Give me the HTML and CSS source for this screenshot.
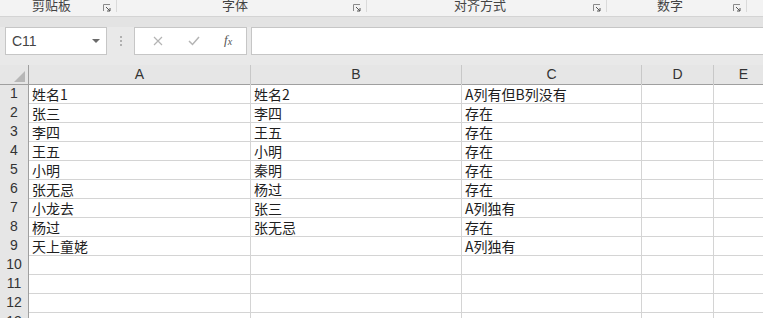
FILE: index.html
```html
<!DOCTYPE html>
<html lang="zh-CN">
<head>
    <meta charset="UTF-8">
    <title>工作表</title>
    <link rel="stylesheet" href="styles.css">
</head>
<body>
    <div class="ribbon">
        <div class="group group-clip">
            <span class="group-label">剪贴板</span>
            <svg class="launcher" width="8" height="8" viewBox="0 0 8 8"><path d="M0.5 7V0.5H7" fill="none" stroke="#8a8a8a"/><path d="M3 3L7 7M4 7H7V4" fill="none" stroke="#555"/></svg>
        </div>
        <div class="group group-font">
            <span class="group-label">字体</span>
            <svg class="launcher" width="8" height="8" viewBox="0 0 8 8"><path d="M0.5 7V0.5H7" fill="none" stroke="#8a8a8a"/><path d="M3 3L7 7M4 7H7V4" fill="none" stroke="#555"/></svg>
        </div>
        <div class="group group-align">
            <span class="group-label">对齐方式</span>
            <svg class="launcher" width="8" height="8" viewBox="0 0 8 8"><path d="M0.5 7V0.5H7" fill="none" stroke="#8a8a8a"/><path d="M3 3L7 7M4 7H7V4" fill="none" stroke="#555"/></svg>
        </div>
        <div class="group group-number">
            <span class="group-label">数字</span>
            <svg class="launcher" width="8" height="8" viewBox="0 0 8 8"><path d="M0.5 7V0.5H7" fill="none" stroke="#8a8a8a"/><path d="M3 3L7 7M4 7H7V4" fill="none" stroke="#555"/></svg>
        </div>
        <div class="group group-rest"></div>
    </div>
    <div class="ribbon-strip"></div>

    <div class="formula-bar">
        <div class="name-box">
            <span>C11</span>
            <span class="name-arrow"></span>
        </div>
        <div class="grip"><i></i><i></i><i></i></div>
        <div class="fx-box">
            <svg class="fx-btn" width="10" height="10" viewBox="0 0 10 10"><path d="M1 1L9 9M9 1L1 9" stroke="#b4b4b4" stroke-width="1.2"/></svg>
            <svg class="fx-btn" width="12" height="10" viewBox="0 0 12 10"><path d="M1 5L4.5 8.5L11 1" fill="none" stroke="#b4b4b4" stroke-width="1.5"/></svg>
            <span class="fx-label">f<sub>x</sub></span>
        </div>
        <div class="formula-input"></div>
    </div>

    <div class="sheet">
        <div class="row head-row">
            <div class="corner"><span class="corner-tri"></span></div>
            <div class="col-head">A</div>
            <div class="col-head">B</div>
            <div class="col-head">C</div>
            <div class="col-head">D</div>
            <div class="col-head">E</div>
        </div>
        <div class="row">
            <div class="row-head">1</div>
            <div class="cell">姓名1</div><div class="cell">姓名2</div><div class="cell">A列有但B列没有</div><div class="cell"></div><div class="cell"></div>
        </div>
        <div class="row">
            <div class="row-head">2</div>
            <div class="cell">张三</div><div class="cell">李四</div><div class="cell">存在</div><div class="cell"></div><div class="cell"></div>
        </div>
        <div class="row">
            <div class="row-head">3</div>
            <div class="cell">李四</div><div class="cell">王五</div><div class="cell">存在</div><div class="cell"></div><div class="cell"></div>
        </div>
        <div class="row">
            <div class="row-head">4</div>
            <div class="cell">王五</div><div class="cell">小明</div><div class="cell">存在</div><div class="cell"></div><div class="cell"></div>
        </div>
        <div class="row">
            <div class="row-head">5</div>
            <div class="cell">小明</div><div class="cell">秦明</div><div class="cell">存在</div><div class="cell"></div><div class="cell"></div>
        </div>
        <div class="row">
            <div class="row-head">6</div>
            <div class="cell">张无忌</div><div class="cell">杨过</div><div class="cell">存在</div><div class="cell"></div><div class="cell"></div>
        </div>
        <div class="row">
            <div class="row-head">7</div>
            <div class="cell">小龙去</div><div class="cell">张三</div><div class="cell">A列独有</div><div class="cell"></div><div class="cell"></div>
        </div>
        <div class="row">
            <div class="row-head">8</div>
            <div class="cell">杨过</div><div class="cell">张无忌</div><div class="cell">存在</div><div class="cell"></div><div class="cell"></div>
        </div>
        <div class="row">
            <div class="row-head">9</div>
            <div class="cell">天上童姥</div><div class="cell"></div><div class="cell">A列独有</div><div class="cell"></div><div class="cell"></div>
        </div>
        <div class="row">
            <div class="row-head">10</div>
            <div class="cell"></div><div class="cell"></div><div class="cell"></div><div class="cell"></div><div class="cell"></div>
        </div>
        <div class="row">
            <div class="row-head">11</div>
            <div class="cell"></div><div class="cell"></div><div class="cell"></div><div class="cell"></div><div class="cell"></div>
        </div>
        <div class="row">
            <div class="row-head">12</div>
            <div class="cell"></div><div class="cell"></div><div class="cell"></div><div class="cell"></div><div class="cell"></div>
        </div>
        <div class="row">
            <div class="row-head">13</div>
            <div class="cell"></div><div class="cell"></div><div class="cell"></div><div class="cell"></div><div class="cell"></div>
        </div>
    </div>
</body>
</html>
```

FILE: styles.css
```css
* {
    box-sizing: border-box;
}

body {
    margin: 0;
    width: 763px;
    height: 318px;
    overflow: hidden;
    background: #e9e9e9;
    font-family: "Liberation Sans", "Noto Sans CJK SC", sans-serif;
    color: #222;
}

/* ribbon group labels (cut off at the top) */
.ribbon {
    display: flex;
    height: 17px;
    background: #f3f3f3;
    border-bottom: 1px solid #d4d4d4;
    overflow: hidden;
}

.group {
    display: flex;
    align-items: flex-start;
    border-right: 1px solid #dadada;
    height: 12px;
}

.group-clip { width: 117px; }
.group-font { width: 250px; }
.group-align { width: 240px; }
.group-number { width: 140px; }
.group-rest { flex: 1; border-right: none; }

.group-label {
    flex: 1;
    text-align: center;
    font-family: "Noto Sans CJK SC", sans-serif;
    font-size: 13px;
    line-height: 15px;
    margin-top: -3px;
    color: #444;
}

.launcher {
    margin: 4px 5px 0 0;
}

.ribbon-strip {
    height: 10px;
    background: #e3e3e3;
}

/* formula bar */
.formula-bar {
    display: flex;
    height: 28px;
    padding-left: 5px;
    background: #e9e9e9;
}

.name-box {
    width: 102px;
    background: #fff;
    border: 1px solid #c6c6c6;
    display: flex;
    align-items: center;
    justify-content: space-between;
    padding: 0 6px 0 6px;
    font-size: 14px;
    color: #444;
}

.name-arrow {
    width: 0;
    height: 0;
    border-left: 4px solid transparent;
    border-right: 4px solid transparent;
    border-top: 4px solid #6a6a6a;
}

.grip {
    width: 27px;
    display: flex;
    flex-direction: column;
    align-items: center;
    justify-content: center;
    gap: 2px;
}

.grip i {
    width: 2px;
    height: 2px;
    background: #b0b0b0;
}

.fx-box {
    width: 113px;
    background: #fff;
    border: 1px solid #c6c6c6;
    display: flex;
    align-items: center;
    padding-left: 18px;
}

.fx-btn:first-child {
    margin-right: 25px;
}

.fx-btn:nth-child(2) {
    margin-right: 24px;
}

.fx-label {
    font-family: "Liberation Serif", serif;
    font-style: italic;
    font-size: 13px;
    color: #555;
    margin-top: -2px;
}

.fx-label sub {
    font-size: 10px;
    vertical-align: -1px;
}

.formula-input {
    flex: 1;
    margin-left: 4px;
    background: #fff;
    border: 1px solid #c6c6c6;
    border-right: none;
}

/* sheet grid */
.sheet {
    margin-top: 10px;
    background: #fff;
}

.row {
    display: grid;
    grid-template-columns: 29px 222px 211px 180px 72px 60px;
    height: 19px;
}

.head-row .col-head,
.head-row .corner {
    background: #e6e6e6;
    border-right: 1px solid #c8c8c8;
    border-bottom: 1px solid #9f9f9f;
}

.corner {
    position: relative;
    border-right-color: #9f9f9f !important;
}

.corner-tri {
    position: absolute;
    right: 3px;
    bottom: 2px;
    width: 0;
    height: 0;
    border-left: 11px solid transparent;
    border-bottom: 11px solid #b7b7b7;
}

.col-head {
    text-align: center;
    font-size: 14px;
    line-height: 19px;
    color: #333;
}

.row-head {
    background: #e6e6e6;
    border-right: 1px solid #9f9f9f;
    border-bottom: 1px solid #cfcfcf;
    text-align: center;
    font-size: 14px;
    line-height: 19px;
    color: #333;
}

.cell {
    border-right: 1px solid #d4d4d4;
    border-bottom: 1px solid #d4d4d4;
    padding: 1px 0 0 3px;
    font-family: "Noto Sans CJK SC", sans-serif;
    font-size: 14px;
    line-height: 18px;
    color: #1e1e1e;
    white-space: nowrap;
    overflow: hidden;
}
```
